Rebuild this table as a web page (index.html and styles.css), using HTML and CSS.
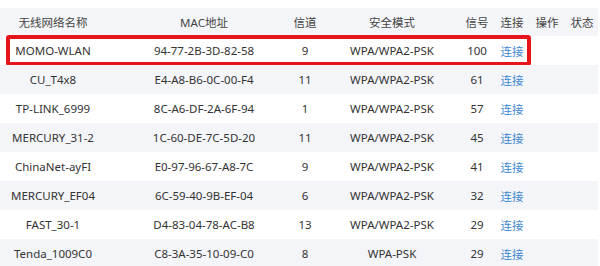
FILE: index.html
```html
<!DOCTYPE html>
<html>
<head>
<meta charset="utf-8">
<link rel="stylesheet" href="styles.css">
</head>
<body>
<div class="table">
  <div class="row head">
    <div class="c c1">无线网络名称</div><div class="c c2">MAC地址</div><div class="c c3">信道</div><div class="c c4">安全模式</div><div class="c c5">信号</div><div class="c c6">连接</div><div class="c c7">操作</div><div class="c c8">状态</div>
  </div>
  <div class="row odd">
    <div class="c c1">MOMO-WLAN</div><div class="c c2">94-77-2B-3D-82-58</div><div class="c c3">9</div><div class="c c4">WPA/WPA2-PSK</div><div class="c c5">100</div><div class="c c6 link">连接</div><div class="c c7"></div><div class="c c8"></div>
    <div class="mark"></div>
  </div>
  <div class="row even">
    <div class="c c1">CU_T4x8</div><div class="c c2">E4-A8-B6-0C-00-F4</div><div class="c c3">11</div><div class="c c4">WPA/WPA2-PSK</div><div class="c c5">61</div><div class="c c6 link">连接</div><div class="c c7"></div><div class="c c8"></div>
  </div>
  <div class="row odd">
    <div class="c c1">TP-LINK_6999</div><div class="c c2">8C-A6-DF-2A-6F-94</div><div class="c c3">1</div><div class="c c4">WPA/WPA2-PSK</div><div class="c c5">57</div><div class="c c6 link">连接</div><div class="c c7"></div><div class="c c8"></div>
  </div>
  <div class="row even">
    <div class="c c1">MERCURY_31-2</div><div class="c c2">1C-60-DE-7C-5D-20</div><div class="c c3">11</div><div class="c c4">WPA/WPA2-PSK</div><div class="c c5">45</div><div class="c c6 link">连接</div><div class="c c7"></div><div class="c c8"></div>
  </div>
  <div class="row odd">
    <div class="c c1">ChinaNet-ayFI</div><div class="c c2">E0-97-96-67-A8-7C</div><div class="c c3">9</div><div class="c c4">WPA/WPA2-PSK</div><div class="c c5">41</div><div class="c c6 link">连接</div><div class="c c7"></div><div class="c c8"></div>
  </div>
  <div class="row even">
    <div class="c c1">MERCURY_EF04</div><div class="c c2">6C-59-40-9B-EF-04</div><div class="c c3">6</div><div class="c c4">WPA/WPA2-PSK</div><div class="c c5">32</div><div class="c c6 link">连接</div><div class="c c7"></div><div class="c c8"></div>
  </div>
  <div class="row odd">
    <div class="c c1">FAST_30-1</div><div class="c c2">D4-83-04-78-AC-B8</div><div class="c c3">13</div><div class="c c4">WPA/WPA2-PSK</div><div class="c c5">29</div><div class="c c6 link">连接</div><div class="c c7"></div><div class="c c8"></div>
  </div>
  <div class="row even">
    <div class="c c1">Tenda_1009C0</div><div class="c c2">C8-3A-35-10-09-C0</div><div class="c c3">8</div><div class="c c4">WPA-PSK</div><div class="c c5">29</div><div class="c c6 link">连接</div><div class="c c7"></div><div class="c c8"></div>
  </div>
</div>
</body>
</html>
```
FILE: styles.css
```css
html, body {
  margin: 0;
  padding: 0;
  background: #ffffff;
}
body {
  width: 600px;
  height: 266px;
  overflow: hidden;
  font-family: "Noto Sans", "Noto Sans CJK SC", sans-serif;
  font-size: 11.5px;
  color: #333333;
}
.table {
  padding-top: 8px;
  width: 598px;
}
.row {
  position: relative;
  display: grid;
  grid-template-columns: 106px 168px 56px 117px 50px 30px 35px 35px;
  height: 29px;
  align-items: center;
}
.head {
  height: 28px;
  background: #f4f5f9;
  color: #444444;
}
.even { background: #f4f5f9; }
.odd { background: #ffffff; }
.c {
  text-align: center;
  white-space: nowrap;
}
.c2 { padding-left: 28px; }
.c3 { padding-left: 6px; }
.c4 { padding-left: 7px; }
.c5 { padding-left: 10px; }
.c7 { padding-left: 5px; }
.c8 { padding-left: 5px; }
.link { color: #3f88d0; }
.mark {
  position: absolute;
  left: 6px;
  top: -1px;
  width: 517px;
  height: 23px;
  border: 4px solid #e8141c;
  border-radius: 3px;
}
```
